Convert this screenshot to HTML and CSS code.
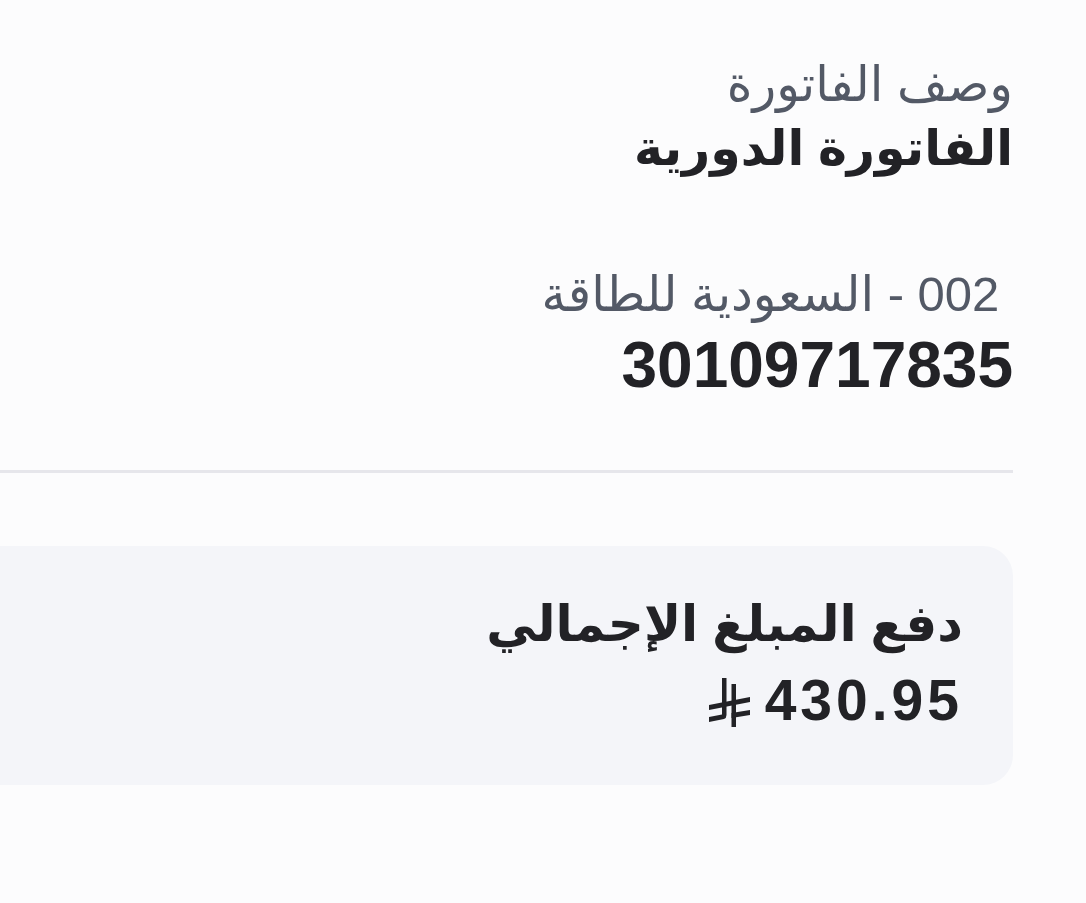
FILE: index.html
```html
<!DOCTYPE html>
<html lang="ar" dir="rtl">
<head>
  <meta charset="UTF-8" />
  <meta name="viewport" content="width=device-width, initial-scale=1.0" />
  <title>تفاصيل الفاتورة</title>
  <link rel="stylesheet" href="styles.css">
</head>
<body>
  <div class="invoice">
    <div class="field">
      <div class="label">وصف الفاتورة</div>
      <div class="value">الفاتورة الدورية</div>
    </div>

    <div class="field field-account">
      <div class="label">&nbsp;002 - السعودية للطاقة</div>
      <div class="value number">30109717835</div>
    </div>

    <hr class="divider" />

    <div class="total-card">
      <div class="total-title">دفع المبلغ الإجمالي</div>
      <div class="amount">
        <span class="amount-value">430.95</span>
        <!-- riyal sign -->
        <svg class="riyal" width="42" height="52" viewBox="0 0 42 52" aria-hidden="true">
          <path d="M13 2 H17.5 V39 Q17.5 42 15 43 L0 46 V41 L13 38.5 Z" />
          <rect x="22.5" y="8" width="4.5" height="43" />
          <polygon points="0,29 41,21 41,26 0,34" />
          <polygon points="22.5,37 41,34 41,39 22.5,42" />
        </svg>
      </div>
    </div>
  </div>
</body>
</html>
```

FILE: styles.css
```css
body {
  font-family: 'Liberation Sans', 'DejaVu Sans', sans-serif;
  margin: 0;
  padding: 0;
  background-color: #fcfcfd;
  color: #222226;
  overflow: hidden;
}

.invoice {
  padding: 54px 73px 0 0;
  margin-left: -40px;
}

.label {
  font-size: 49px;
  line-height: 60px;
  color: #535966;
}

.value {
  font-size: 49px;
  line-height: 68px;
  font-weight: 700;
}

.field-account {
  margin-top: 82px;
}

.number {
  font-size: 64px;
  line-height: 76px;
  margin-top: 3px;
}

.divider {
  border: none;
  height: 3px;
  background-color: #e6e6eb;
  margin: 67px 0 0 0;
}

.total-card {
  margin-top: 73px;
  background-color: #f4f5f9;
  border-radius: 30px;
  padding: 46px 50px 40px 50px;
  height: 239px;
  box-sizing: border-box;
}

.total-title {
  font-size: 50px;
  line-height: 64px;
  font-weight: 700;
}

.amount {
  display: flex;
  align-items: center;
  gap: 14px;
  margin-top: 12px;
}

.amount-value {
  font-size: 57px;
  line-height: 64px;
  font-weight: 700;
  letter-spacing: 4px;
  direction: ltr;
}

.riyal {
  fill: #222226;
  margin-top: 4px;
}
```
